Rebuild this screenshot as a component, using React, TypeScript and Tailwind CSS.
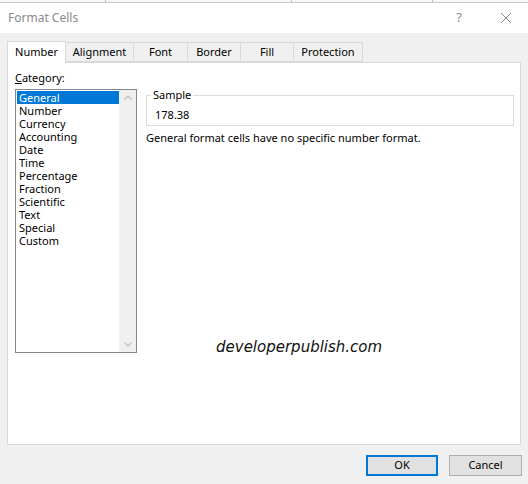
import { useState } from 'react';

const categories = [
  'General',
  'Number',
  'Currency',
  'Accounting',
  'Date',
  'Time',
  'Percentage',
  'Fraction',
  'Scientific',
  'Text',
  'Special',
  'Custom',
];

const tabs = [
  { name: 'Number', w: 'w-[59px]' },
  { name: 'Alignment', w: 'w-[68px]' },
  { name: 'Font', w: 'w-[54px]' },
  { name: 'Border', w: 'w-[53px]' },
  { name: 'Fill', w: 'w-[53px]' },
  { name: 'Protection', w: 'w-[69px]' },
];

export default function App() {
  const [selected, setSelected] = useState('General');

  return (
    <div className="w-[528px] h-[484px] bg-[#f0f0f0] flex flex-col overflow-hidden text-[11px] text-black font-['Noto_Sans',sans-serif]">
      {/* sliver of the sheet behind the dialog */}
      <div className="h-[3px] bg-[#f7f7f7] border-b border-[#c8c8c8] flex">
        <div className="w-[106px] border-r border-[#bdbdbd]" />
        <div className="w-[186px] border-r border-[#bdbdbd]" />
        <div className="w-[141px] border-r border-[#bdbdbd]" />
      </div>

      {/* title bar */}
      <div className="h-[30px] bg-white flex items-center pl-[8px]">
        <span className="text-[#8a8a8a] text-[12px]">Format Cells</span>
        <span className="ml-auto mr-[38px] text-[#8a8a8a] text-[13px]">?</span>
        <svg width="12" height="12" viewBox="0 0 12 12" className="mr-[16px]">
          <path d="M1 1 L11 11 M11 1 L1 11" stroke="#8a8a8a" strokeWidth="1" />
        </svg>
      </div>

      {/* body */}
      <div className="flex-1 flex flex-col px-[7px] pt-[7px]">
        <div className="flex items-end h-[22px]">
          {tabs.map((t) => {
            const active = t.name === 'Number';
            return active ? (
              <div
                key={t.name}
                className={`${t.w} h-[22px] bg-white border border-b-0 border-[#d9d9d9] flex items-center justify-center relative top-[1px] z-10`}
              >
                {t.name}
              </div>
            ) : (
              <div
                key={t.name}
                className={`${t.w} h-[20px] bg-[#f0f0f0] border border-l-0 border-[#d9d9d9] flex items-center justify-center`}
              >
                {t.name}
              </div>
            );
          })}
        </div>

        <div className="w-[514px] h-[383px] bg-white border border-[#d9d9d9] flex pl-[7px] pt-[7px] gap-[9px]">
          <div className="flex flex-col">
            <div className="h-[19px] leading-[16px]">
              <span className="underline">C</span>ategory:
            </div>
            <div className="w-[122px] h-[264px] border border-[#828790] flex p-[1px] pr-0">
              <div className="flex-1 flex flex-col">
                {categories.map((c) => (
                  <div
                    key={c}
                    onClick={() => setSelected(c)}
                    className={`h-[13px] leading-[13px] pl-[2px] cursor-default ${
                      selected === c ? 'bg-[#0078d7] text-white' : ''
                    }`}
                  >
                    {c}
                  </div>
                ))}
              </div>
              <div className="w-[17px] bg-[#f0f0f0] flex flex-col items-center justify-between py-[5px] -my-[1px]">
                <svg width="8" height="5" viewBox="0 0 8 5">
                  <path d="M0.5 4.5 L4 1 L7.5 4.5" stroke="#c2c2c2" strokeWidth="1.4" fill="none" />
                </svg>
                <svg width="8" height="5" viewBox="0 0 8 5">
                  <path d="M0.5 0.5 L4 4 L7.5 0.5" stroke="#c2c2c2" strokeWidth="1.4" fill="none" />
                </svg>
              </div>
            </div>
          </div>

          <div className="flex-1 flex flex-col pt-[25px] pr-[6px]">
            <div className="h-[31px] border border-[#dcdcdc] relative flex items-center pl-[8px] pt-[9px]">
              <span className="absolute -top-[9px] left-[4px] bg-white px-[2px] leading-[16px]">Sample</span>
              178.38
            </div>
            <div className="mt-[4px] leading-[16px]">General format cells have no specific number format.</div>
            <div className="mt-[190px] ml-[70px] text-[15px] italic font-['DejaVu_Sans',sans-serif] text-[#111]">
              developerpublish.com
            </div>
          </div>
        </div>

        <div className="flex justify-end gap-[11px] mt-[10px] -mr-[1px]">
          <button className="w-[72px] h-[21px] bg-[#e1e1e1] border-2 border-[#0078d7] flex items-center justify-center text-[11px]">
            OK
          </button>
          <button className="w-[73px] h-[21px] bg-[#e1e1e1] border border-[#adadad] flex items-center justify-center text-[11px]">
            Cancel
          </button>
        </div>
      </div>
    </div>
  );
}
